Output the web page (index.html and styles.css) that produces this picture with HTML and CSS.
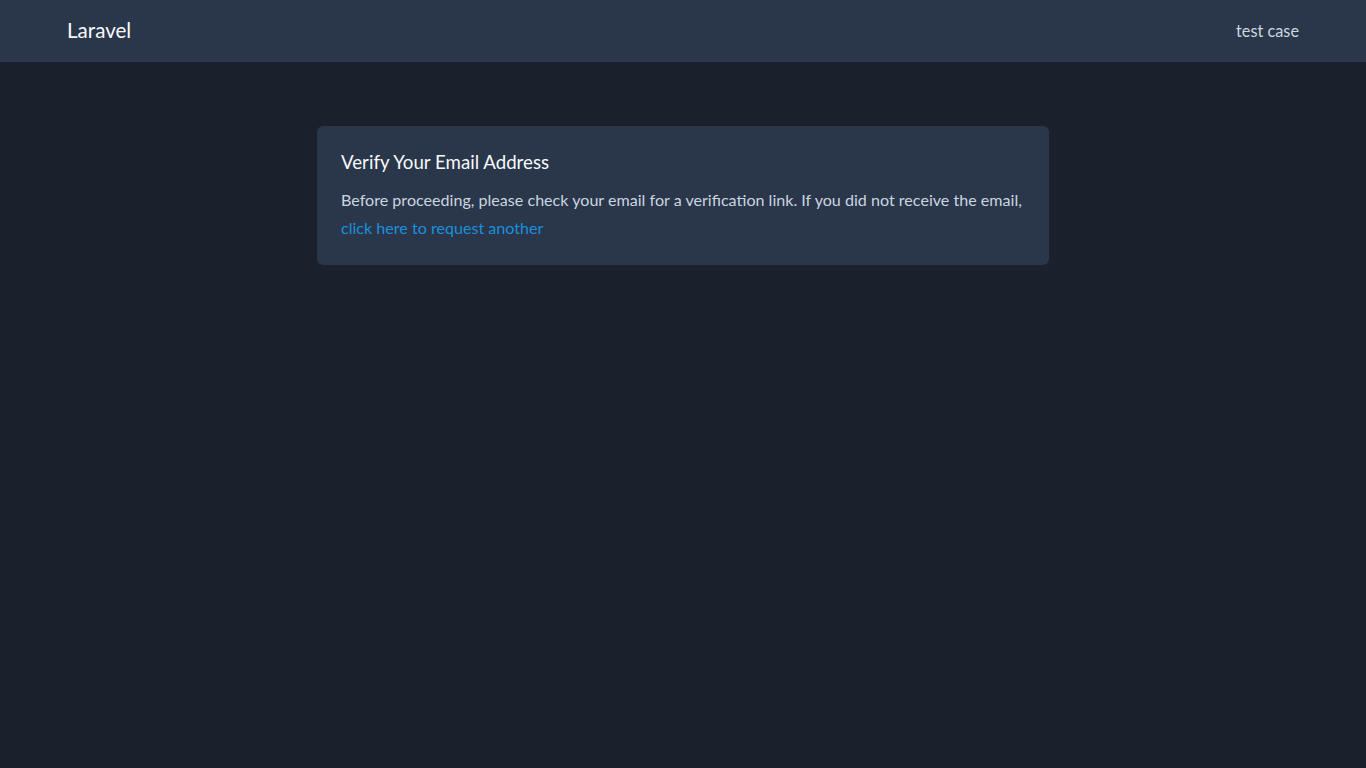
FILE: index.html
```html
<!DOCTYPE html>
<html lang="en">
<head>
<meta charset="utf-8">
<title>Laravel</title>
<link rel="stylesheet" href="styles.css">
</head>
<body>
<header class="navbar">
  <div class="container nav-inner">
    <a class="brand" href="#">Laravel</a>
    <span class="user">test case</span>
  </div>
</header>
<main class="main">
  <div class="card">
    <h2 class="card-title">Verify Your Email Address</h2>
    <p class="card-text"><span class="line">Before proceeding, please check your email for a verification link. If you did not receive the email,</span><br><a class="link" href="#">click here to request another</a></p>
  </div>
</main>
</body>
</html>
```
FILE: styles.css
```css
html, body {
  margin: 0;
  padding: 0;
}
body {
  background: #1a202c;
  font-family: "Lato", "Noto Sans", sans-serif;
  color: #cbd5e0;
  min-height: 768px;
}
.navbar {
  background: #2a3649;
  height: 62px;
}
.container {
  width: 1232px;
  margin: 0 auto;
}
.nav-inner {
  height: 100%;
  display: flex;
  align-items: center;
  justify-content: space-between;
}
.brand {
  color: #f7fafc;
  text-decoration: none;
  font-size: 20.6px;
  margin-top: -3px;
}
.user {
  color: #cbd5e0;
  font-size: 16.3px;
  margin-top: -1px;
}
.main {
  padding-top: 64px;
  display: flex;
  justify-content: center;
}
.card {
  width: 732px;
  box-sizing: border-box;
  background: #2a3649;
  border-radius: 6px;
  padding: 24px 24px 23px;
}
.card-title {
  margin: 0 0 12px;
  font-weight: 400;
  font-size: 18.7px;
  line-height: 24px;
  color: #f7fafc;
}
.card-text {
  margin: 0;
  font-size: 16.1px;
  line-height: 28px;
  color: #cbd5e0;
}
.line {
  white-space: nowrap;
}
.link {
  color: #1b90dc;
  text-decoration: none;
}
```
